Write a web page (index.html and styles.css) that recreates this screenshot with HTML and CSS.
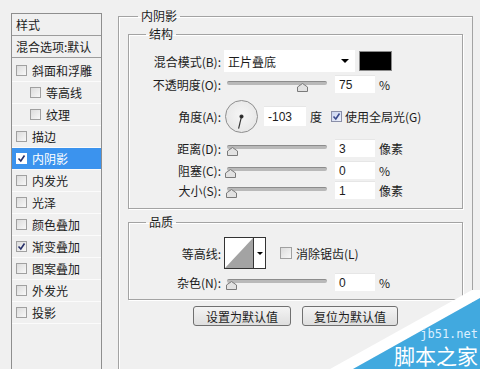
FILE: index.html
```html
<!DOCTYPE html>
<html lang="zh-CN">
<head>
    <meta charset="UTF-8">
    <title>图层样式 - 内阴影</title>
    <link rel="stylesheet" href="styles.css">
</head>
<body>
    <div class="sidebar">
        <div class="side-head">样式</div>
        <div class="side-head">混合选项:默认</div>
        <ul class="fx-list">
            <li><span class="cb"></span>斜面和浮雕</li>
            <li class="sub"><span class="cb"></span>等高线</li>
            <li class="sub"><span class="cb"></span>纹理</li>
            <li><span class="cb"></span>描边</li>
            <li class="active"><span class="cb on"><svg viewBox="0 0 9 9"><path d="M1.5 4.5 L3.8 7 L7.5 1.5" /></svg></span>内阴影</li>
            <li><span class="cb"></span>内发光</li>
            <li><span class="cb"></span>光泽</li>
            <li><span class="cb"></span>颜色叠加</li>
            <li><span class="cb on"><svg viewBox="0 0 9 9"><path d="M1.5 4.5 L3.8 7 L7.5 1.5" /></svg></span>渐变叠加</li>
            <li><span class="cb"></span>图案叠加</li>
            <li><span class="cb"></span>外发光</li>
            <li><span class="cb"></span>投影</li>
        </ul>
    </div>

    <div class="main">
        <fieldset class="group outer">
            <legend>内阴影</legend>

            <fieldset class="group structure">
                <legend>结构</legend>
                <div class="row r-blend">
                    <label class="lbl">混合模式(B):</label>
                    <div class="select">正片叠底<span class="caret"></span></div>
                    <span class="swatch"></span>
                </div>
                <div class="row r-22">
                    <label class="lbl">不透明度(O):</label>
                    <div class="slider"><span class="thumb" style="left: 70px;"><svg viewBox="0 0 11 9"><polygon points="5.5,0.5 10.5,4 10.5,8.5 0.5,8.5 0.5,4" /></svg></span></div>
                    <span class="num">75</span>
                    <span class="unit">%</span>
                </div>
                <div class="row r-angle">
                    <label class="lbl">角度(A):</label>
                    <span class="dial">
                        <svg viewBox="0 0 33 33">
                            <line x1="16.5" y1="16.5" x2="13.4" y2="29.3" />
                            <circle cx="16.5" cy="16.5" r="1.6" />
                        </svg>
                    </span>
                    <span class="num wide">-103</span>
                    <span class="unit">度</span>
                    <span class="cb global"><svg viewBox="0 0 9 9"><path d="M1.5 4.5 L3.8 7 L7.5 1.5" /></svg></span>
                    <span class="cb-label">使用全局光(G)</span>
                </div>
                <div class="row r-22">
                    <label class="lbl">距离(D):</label>
                    <div class="slider"><span class="thumb" style="left: 0px;"><svg viewBox="0 0 11 9"><polygon points="5.5,0.5 10.5,4 10.5,8.5 0.5,8.5 0.5,4" /></svg></span></div>
                    <span class="num">3</span>
                    <span class="unit">像素</span>
                </div>
                <div class="row r-22">
                    <label class="lbl">阻塞(C):</label>
                    <div class="slider"><span class="thumb" style="left: -2px;"><svg viewBox="0 0 11 9"><polygon points="5.5,0.5 10.5,4 10.5,8.5 0.5,8.5 0.5,4" /></svg></span></div>
                    <span class="num">0</span>
                    <span class="unit">%</span>
                </div>
                <div class="row r-18">
                    <label class="lbl">大小(S):</label>
                    <div class="slider"><span class="thumb" style="left: -1px;"><svg viewBox="0 0 11 9"><polygon points="5.5,0.5 10.5,4 10.5,8.5 0.5,8.5 0.5,4" /></svg></span></div>
                    <span class="num">1</span>
                    <span class="unit">像素</span>
                </div>
            </fieldset>

            <fieldset class="group quality">
                <legend>品质</legend>
                <div class="row r-contour">
                    <label class="lbl">等高线:</label>
                    <div class="contour">
                        <span class="curve"><svg viewBox="0 0 28 30"><polygon points="0,30 28,0 28,30" /></svg></span>
                        <span class="curve-drop"><span class="caret small"></span></span>
                    </div>
                    <span class="cb aa"></span>
                    <span class="cb-label">消除锯齿(L)</span>
                </div>
                <div class="row r-noise">
                    <label class="lbl">杂色(N):</label>
                    <div class="slider"><span class="thumb" style="left: -1px;"><svg viewBox="0 0 11 9"><polygon points="5.5,0.5 10.5,4 10.5,8.5 0.5,8.5 0.5,4" /></svg></span></div>
                    <span class="num">0</span>
                    <span class="unit">%</span>
                </div>
            </fieldset>

            <div class="btns">
                <button class="btn set">设置为默认值</button>
                <button class="btn reset">复位为默认值</button>
            </div>
        </fieldset>
    </div>

    <div class="watermark">
        <svg viewBox="0 0 150 80">
            <polygon class="wm-white" points="142,1 150,1 150,9 23,80 0,80" />
            <polygon class="wm-blue" points="150,9 150,80 23,80" />
        </svg>
        <span class="wm-url">jb51.net</span>
        <span class="wm-name">脚本之家</span>
    </div>
</body>
</html>
```

FILE: styles.css
```css
* {
    box-sizing: border-box;
}
html, body {
    margin: 0;
    height: 100%;
}
body {
    width: 480px;
    height: 369px;
    overflow: hidden;
    position: relative;
    display: flex;
    align-items: flex-start;
    background-color: #f0f0f0;
    font-family: "Noto Sans CJK SC", "Liberation Sans", sans-serif;
    font-size: 12px;
    color: #1c1c1c;
}

/* left list of effects */
.sidebar {
    margin: 13px 0 0 11px;
    width: 91px;
    height: 356px;
    border: 1px solid #8e8e8e;
    border-bottom: none;
}
.side-head {
    height: 22px;
    line-height: 21px;
    padding-left: 4px;
    border-bottom: 1px solid #9c9c9c;
    white-space: nowrap;
}
.fx-list {
    list-style: none;
    margin: 0;
    padding: 2px 0 0;
}
.fx-list li {
    height: 22px;
    display: flex;
    align-items: center;
    padding-left: 4px;
    border-bottom: 1px solid #fbfbfb;
    white-space: nowrap;
}
.fx-list li.sub {
    padding-left: 18px;
}
.fx-list li.active {
    background-color: #3b93ee;
    color: #fff;
}
.cb {
    width: 11px;
    height: 11px;
    flex: none;
    margin-right: 5px;
    border: 1px solid #a0a0a0;
    background: linear-gradient(135deg, #dcdcdc, #f8f8f8);
    display: flex;
    align-items: center;
    justify-content: center;
}
.cb svg {
    width: 9px;
    height: 9px;
    fill: none;
    stroke: #27306a;
    stroke-width: 1.6;
}
.active .cb {
    background: #fff;
    border-color: #fff;
}

/* right side */
.main {
    margin-left: 16px;
    width: 355px;
}
.group {
    margin: 0;
    padding: 0;
    min-width: 0;
    border: 1px solid #a3a3a3;
    box-shadow: 1px 1px 0 #fff, inset 1px 1px 0 #fff;
}
.group > legend {
    padding: 0 3px;
    line-height: 16px;
    height: 16px;
}
.outer {
    margin-top: 8px;
    height: 361px;
    padding: 2px 9px 0;
    border-bottom: none;
    box-shadow: inset 1px 1px 0 #fff;
}
.outer > legend {
    margin-left: 10px;
}
.structure, .quality {
    padding: 7px 0 9px;
}
.structure > legend, .quality > legend {
    margin-left: 17px;
}
.quality {
    margin-top: 5px;
    padding-bottom: 8px;
}

.row {
    display: flex;
    align-items: center;
    white-space: nowrap;
}
.r-blend { height: 24px; }
.r-22 { height: 22px; }
.r-18 { height: 18px; }
.r-angle { height: 42px; }
.r-contour { height: 32px; }
.r-noise { height: 18px; margin-top: 4px; }

.lbl {
    width: 92px;
    margin-right: 3px;
    text-align: right;
    flex: none;
}

.select {
    width: 131px;
    height: 22px;
    padding-left: 4px;
    background-color: #fff;
    display: flex;
    align-items: center;
    justify-content: space-between;
}
.caret {
    width: 0;
    height: 0;
    margin-right: 6px;
    border-left: 4px solid transparent;
    border-right: 4px solid transparent;
    border-top: 4px solid #000;
}
.caret.small {
    margin: 0;
    border-width: 3px 3px 0;
}
.swatch {
    width: 33px;
    height: 20px;
    margin-left: 4px;
    background-color: #000;
    border: 1px solid #8a8a8a;
}

.slider {
    position: relative;
    width: 100px;
    height: 4px;
    margin: -3px 0 0 3px;
    background-color: #b9b9b9;
    border-top: 1px solid #8c8c8c;
    border-radius: 2px;
}
.thumb {
    position: absolute;
    top: 1px;
    width: 11px;
    height: 9px;
}
.thumb svg {
    display: block;
    width: 11px;
    height: 9px;
    fill: #e2e2e2;
    stroke: #7a7a7a;
    stroke-width: 1;
}
.num {
    width: 40px;
    height: 18px;
    margin-left: 8px;
    padding-left: 4px;
    line-height: 18px;
    background-color: #fff;
    border-top: 1px solid #e6e6e6;
    font-family: "Liberation Sans", sans-serif;
    font-size: 12px;
}
.num.wide {
    width: 42px;
    height: 20px;
    line-height: 20px;
    margin-left: 6px;
}
.unit {
    margin-left: 4px;
}

.dial {
    width: 33px;
    height: 33px;
    margin-left: 1px;
    border: 1px solid #8e8e8e;
    border-radius: 50%;
    background: radial-gradient(circle at 50% 45%, #f6f6f6, #e2e2e2);
}
.dial svg {
    display: block;
    width: 31px;
    height: 31px;
    stroke: #333;
    stroke-width: 1.2;
    fill: #222;
}
.cb.global {
    margin: 0 3px 0 9px;
    background: linear-gradient(135deg, #c9d3ee, #eef1fb);
    border-color: #8a8fa8;
}
.cb.global svg {
    stroke: #3a4a8c;
}
.cb.aa {
    width: 12px;
    height: 12px;
    margin: 0 4px 0 14px;
}

.contour {
    width: 42px;
    height: 32px;
    display: flex;
    border: 1px solid #333;
    background-color: #fff;
}
.curve {
    width: 29px;
    border-right: 1px solid #333;
}
.curve svg {
    display: block;
    width: 28px;
    height: 30px;
    fill: #a3a3a3;
}
.curve-drop {
    flex: 1;
    display: flex;
    align-items: center;
    justify-content: center;
}

.btns {
    margin-top: 6px;
    display: flex;
    justify-content: center;
    gap: 11px;
}
.btn {
    height: 20px;
    padding: 0;
    border: 1px solid #707070;
    border-radius: 3px;
    background: linear-gradient(#f4f4f4, #dedede);
    font-family: "Noto Sans CJK SC", sans-serif;
    font-size: 12px;
    color: #1c1c1c;
    line-height: 17px;
}
.btn.set { width: 98px; }
.btn.reset { width: 96px; }

/* site watermark over the corner */
.watermark {
    position: absolute;
    right: 0;
    bottom: 0;
    width: 150px;
    height: 80px;
    overflow: hidden;
}
.watermark svg {
    display: block;
    width: 150px;
    height: 80px;
}
.wm-white { fill: #fff; }
.wm-blue { fill: #41a9df; }
.wm-url {
    position: absolute;
    right: 2px;
    top: 38px;
    font-family: "DejaVu Sans Mono", monospace;
    font-size: 12px;
    line-height: 14px;
    color: #dcefff;
}
.wm-name {
    position: absolute;
    right: 2px;
    top: 53px;
    font-size: 21px;
    line-height: 26px;
    color: #fff;
}
```
